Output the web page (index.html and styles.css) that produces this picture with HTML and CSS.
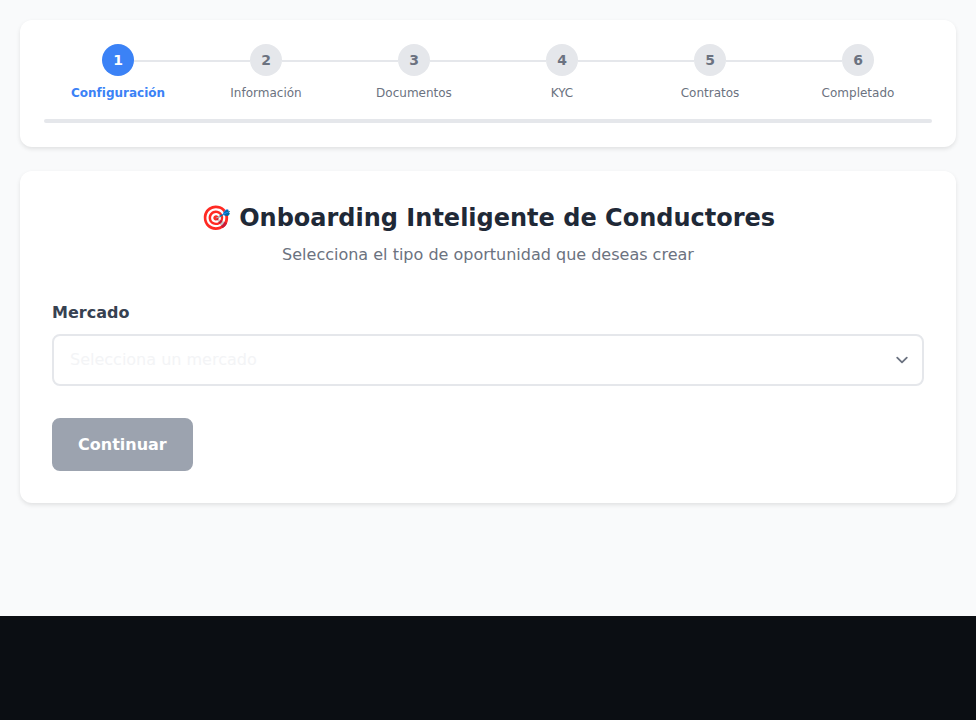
FILE: index.html
```html
<!DOCTYPE html>
<html lang="es">
<head>
<meta charset="utf-8">
<meta name="viewport" content="width=device-width, initial-scale=1">
<title>Onboarding Inteligente de Conductores</title>
<link rel="stylesheet" href="styles.css">
</head>
<body>
<main class="page">
  <nav class="card progress-card" aria-label="Progreso">
    <ol class="steps">
      <li class="step step-active" aria-current="step"><span class="step-number">1</span><span class="step-label">Configuración</span></li>
      <li class="step"><span class="step-number">2</span><span class="step-label">Información</span></li>
      <li class="step"><span class="step-number">3</span><span class="step-label">Documentos</span></li>
      <li class="step"><span class="step-number">4</span><span class="step-label">KYC</span></li>
      <li class="step"><span class="step-number">5</span><span class="step-label">Contratos</span></li>
      <li class="step"><span class="step-number">6</span><span class="step-label">Completado</span></li>
    </ol>
    <div class="progress-bar"></div>
  </nav>

  <section class="card form-card">
    <header class="form-header">
      <h1 class="title">🎯 Onboarding Inteligente de Conductores</h1>
      <p class="subtitle">Selecciona el tipo de oportunidad que deseas crear</p>
    </header>
    <form class="form">
      <div class="field">
        <label class="field-label" for="market">Mercado</label>
        <div class="select-wrap">
          <select class="select" id="market" name="market">
            <option value="">Selecciona un mercado</option>
          </select>
          <svg class="chevron" viewBox="0 0 20 20" fill="none" aria-hidden="true">
            <path d="M6 8l4 4 4-4" stroke="currentColor" stroke-width="1.5" stroke-linecap="round" stroke-linejoin="round"/>
          </svg>
        </div>
      </div>
      <button class="button" type="submit" disabled>Continuar</button>
    </form>
  </section>
</main>
</body>
</html>
```
FILE: styles.css
```css
* {
  box-sizing: border-box;
}

body {
  margin: 0;
  background: #0b0e13;
  font-family: "DejaVu Sans", "Noto Color Emoji", sans-serif;
  font-size: 16px;
}

.page {
  display: flex;
  flex-direction: column;
  gap: 24px;
  min-height: calc(100vh - 104px);
  padding: 20px;
  background: #f9fafb;
}

.card {
  background: #ffffff;
  border-radius: 12px;
  box-shadow: 0 2px 4px rgba(0, 0, 0, 0.1);
}

.progress-card {
  padding: 24px;
}

.steps {
  display: grid;
  grid-template-columns: repeat(6, 1fr);
  margin: 0 0 16px;
  padding: 0;
  list-style: none;
}

.step {
  position: relative;
  display: flex;
  flex-direction: column;
  align-items: center;
  gap: 8px;
  color: #6b7280;
}

.step:not(:last-child)::after {
  content: "";
  position: absolute;
  top: 16px;
  left: calc(50% + 16px);
  width: calc(100% - 32px);
  height: 2px;
  background: #e5e7eb;
}

.step-number {
  display: flex;
  align-items: center;
  justify-content: center;
  width: 32px;
  height: 32px;
  border-radius: 50%;
  background: #e5e7eb;
  font-size: 14px;
  font-weight: 600;
}

.step-label {
  font-size: 12px;
  line-height: 19px;
}

.step-active {
  color: #3b82f6;
}

.step-active .step-number {
  background: #3b82f6;
  color: #ffffff;
}

.step-active .step-label {
  font-weight: 600;
}

.progress-bar {
  height: 4px;
  border-radius: 2px;
  background: #e5e7eb;
}

.form-card {
  padding: 32px;
}

.form-header {
  margin-bottom: 32px;
  text-align: center;
}

.title {
  margin: 0 0 8px;
  color: #1f2937;
  font-size: 24px;
  font-weight: 700;
  line-height: 30px;
}

.subtitle {
  margin: 0;
  color: #6b7280;
  line-height: 27px;
}

.form {
  display: flex;
  flex-direction: column;
  align-items: flex-start;
  gap: 32px;
}

.field {
  display: flex;
  flex-direction: column;
  gap: 8px;
  width: 100%;
}

.field-label {
  color: #374151;
  font-weight: 600;
  line-height: 26px;
}

.select-wrap {
  position: relative;
}

.select {
  display: block;
  width: 100%;
  height: 52px;
  padding: 12px 48px 14px 16px;
  border: 2px solid #e5e7eb;
  border-radius: 8px;
  appearance: none;
  background: #ffffff;
  color: #f3f4f6;
  font: inherit;
}

.chevron {
  position: absolute;
  top: 14px;
  right: 10px;
  width: 24px;
  height: 24px;
  color: #6b7280;
  pointer-events: none;
}

.button {
  padding: 16px 24px;
  border: 2px solid #9ca3af;
  border-radius: 8px;
  background: #9ca3af;
  color: #ffffff;
  font: inherit;
  font-weight: 600;
  line-height: 17px;
}
```
